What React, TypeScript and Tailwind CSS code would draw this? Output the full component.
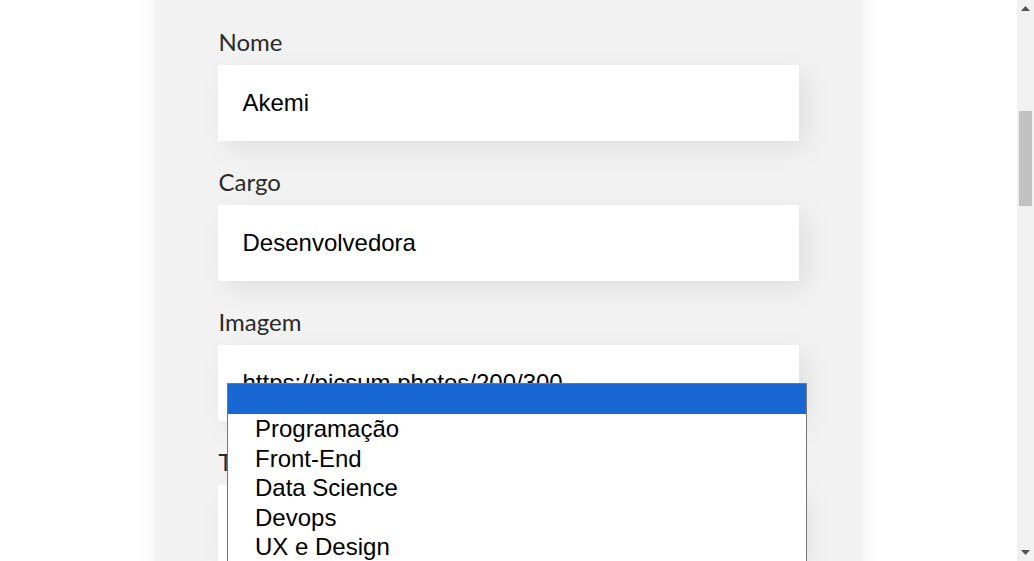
import React from "react";

const fields = [
  { label: "Nome", value: "Akemi" },
  { label: "Cargo", value: "Desenvolvedora" },
  { label: "Imagem", value: "https://picsum.photos/200/300" },
];

const times = ["Programação", "Front-End", "Data Science", "Devops", "UX e Design", "Mobile", "Inovação e Gestão"];

export default function App() {
  return (
    <div className="flex h-[561px] w-[1034px] overflow-hidden bg-white">
      <main className="relative flex-1 overflow-hidden">
        <section className="mx-auto w-[708px] bg-[#f2f2f2] pl-[64px] pr-[63px] shadow-[0_0_18px_rgba(0,0,0,0.07)]">
          <h2 className="-mt-[78px] mb-[24px] text-center font-['Lato',sans-serif] text-[32px] font-bold leading-[40px] text-black">
            Preencha os dados para criar o card do colaborador.
          </h2>
          <div className="flex flex-col gap-[25px] pb-10">
            {fields.map((f) => (
              <div key={f.label}>
                <label className="mb-2 block font-['Lato',sans-serif] text-[24px] leading-[31px] text-[#2a2a2a]">
                  {f.label}
                </label>
                <div className="-ml-px h-[76px] w-full bg-white py-6 pl-[25px] pr-6 font-['Liberation_Sans',Arial,sans-serif] text-[24px] leading-[28px] text-black shadow-[8px_8px_24px_rgba(0,0,0,0.08)]">
                  {f.value}
                </div>
              </div>
            ))}
            <div>
              <label className="mb-2 block font-['Lato',sans-serif] text-[24px] leading-[31px] text-[#2a2a2a]">
                Time
              </label>
              <div className="-ml-px h-[76px] w-full bg-white shadow-[8px_8px_24px_rgba(0,0,0,0.08)]" />
            </div>
          </div>
        </section>

        <div className="absolute left-[227px] top-[383px] w-[580px] border border-[#767676] bg-white font-['Liberation_Sans',Arial,sans-serif] text-[24px] text-black">
          <div className="h-[30px] bg-[#1967d2]" />
          {times.map((t) => (
            <div key={t} className="pl-[27px] leading-[29.5px]">
              {t}
            </div>
          ))}
        </div>
      </main>

      <div className="relative flex h-full w-[17px] flex-col items-center bg-[#f1f1f1]">
        <svg width="9" height="5" viewBox="0 0 9 5" className="absolute left-[4px] top-[6px]">
          <path d="M0 5 L4.5 0 L9 5 Z" fill="#505050" />
        </svg>
        <div className="absolute left-[2px] top-[111px] h-[95px] w-[13px] bg-[#c1c1c1]" />
        <svg width="9" height="5" viewBox="0 0 9 5" className="absolute bottom-[6px] left-[4px]">
          <path d="M0 0 L9 0 L4.5 5 Z" fill="#505050" />
        </svg>
      </div>
    </div>
  );
}
